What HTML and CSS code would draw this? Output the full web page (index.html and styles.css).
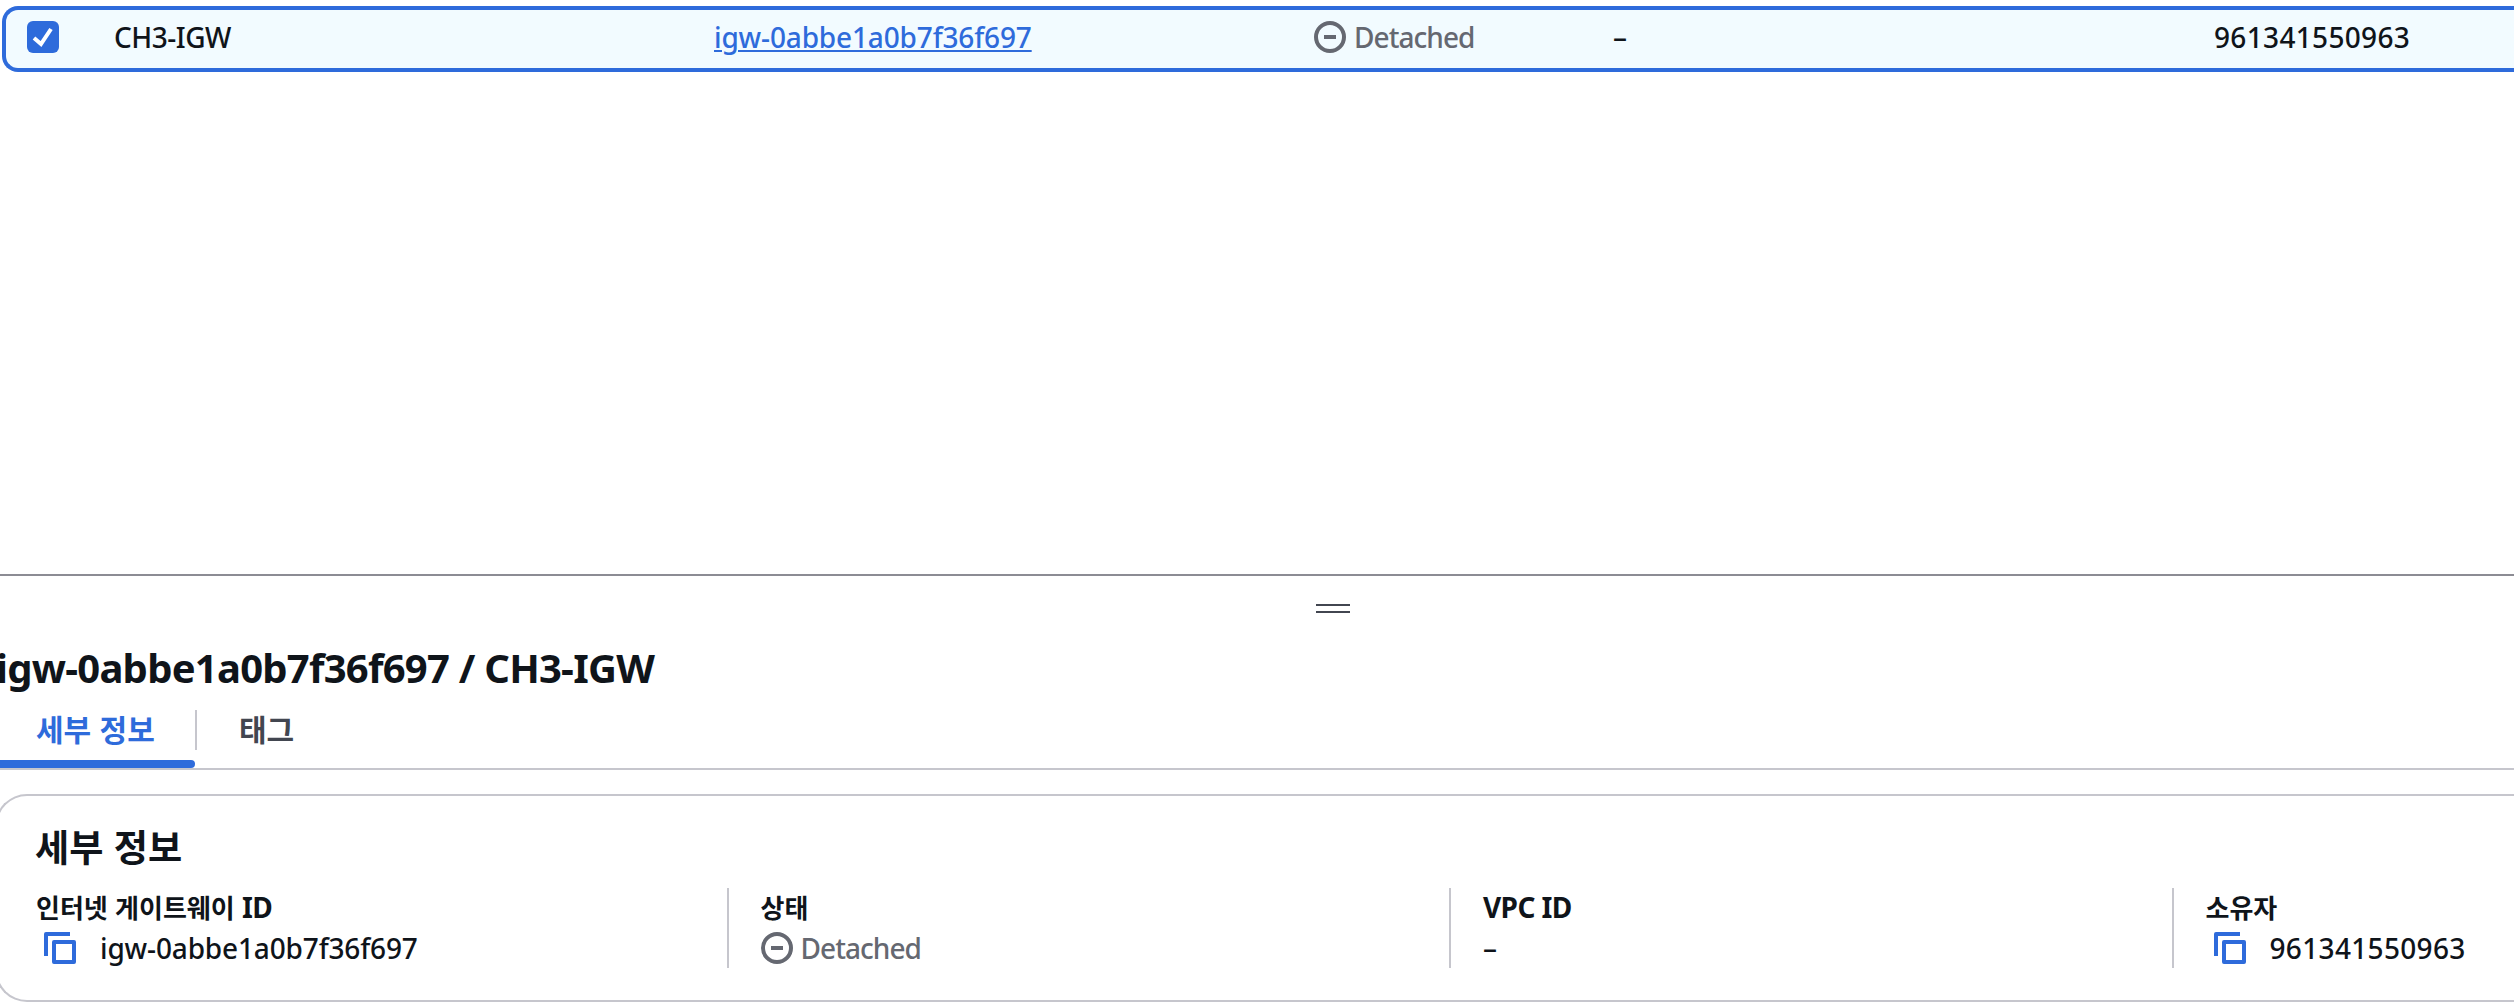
FILE: index.html
```html
<!DOCTYPE html>
<html lang="ko">
<head>
<meta charset="utf-8">
<title>CH3-IGW</title>
<link rel="stylesheet" href="styles.css">
</head>
<body>
<svg class="symbols" aria-hidden="true">
  <symbol id="minus" viewBox="0 0 32 32"><circle cx="16" cy="16" r="14" fill="none" stroke="currentColor" stroke-width="4"/><path d="M10 16h12" stroke="currentColor" stroke-width="4"/></symbol>
  <symbol id="copy" viewBox="0 0 32 32"><path d="M26 2H2v22" fill="none" stroke="currentColor" stroke-width="4" stroke-linejoin="round"/><path d="M10 10h20v20H10z" fill="none" stroke="currentColor" stroke-width="4" stroke-linejoin="round"/></symbol>
</svg>
<main class="list">
  <div class="row">
    <div class="select"><span class="checkbox"><svg viewBox="0 0 32 32"><path d="M7 17l7 6L24 8" fill="none" stroke="#fff" stroke-width="4"/></svg></span></div>
    <div class="cell name"><span class="t-name">CH3-IGW</span></div>
    <div class="cell id"><a class="link t-id" href="#">igw-0abbe1a0b7f36f697</a></div>
    <div class="cell state"><span class="status"><svg class="icon"><use href="#minus"/></svg><span class="t-state">Detached</span></span></div>
    <div class="cell vpc"><span class="t-dash">–</span></div>
    <div class="cell owner"><span class="t-num">961341550963</span></div>
  </div>
</main>
<section class="panel">
  <div class="handle"></div>
  <h1 class="title"><span class="t-title">igw-0abbe1a0b7f36f697 / CH3-IGW</span></h1>
  <nav class="tabs">
    <div class="tab active"><span class="t-tab">세부 정보</span></div>
    <div class="tab"><span class="t-tab">태그</span></div>
  </nav>
  <section class="card">
    <h2 class="card-title">세부 정보</h2>
    <div class="fields">
      <div class="field"><div class="label">인터넷 게이트웨이 <span class="latin">ID</span></div><div class="value"><svg class="icon copy"><use href="#copy"/></svg><span class="t-id">igw-0abbe1a0b7f36f697</span></div></div>
      <div class="field"><div class="label">상태</div><div class="value"><span class="status"><svg class="icon"><use href="#minus"/></svg><span class="t-state">Detached</span></span></div></div>
      <div class="field"><div class="label"><span class="latin">VPC ID</span></div><div class="value"><span class="t-dash">–</span></div></div>
      <div class="field"><div class="label">소유자</div><div class="value"><svg class="icon copy"><use href="#copy"/></svg><span class="t-num">961341550963</span></div></div>
    </div>
  </section>
</section>
</body>
</html>
```
FILE: styles.css
```css
* { box-sizing: border-box; }
body {
  margin: 0;
  height: 1006px;
  overflow: hidden;
  background: #fff;
  color: #0f141a;
  font: 500 28px/40px "Noto Sans", "Noto Sans CJK KR", sans-serif;
  white-space: nowrap;
}
.symbols { display: none; }
.icon { width: 32px; height: 32px; flex: none; }
.list { height: 574px; padding: 6px 0 0 2px; }
.row {
  display: flex;
  height: 66px;
  padding: 7px 0 0 21px;
  border: 4px solid #2e6bdb;
  border-right: 0;
  border-radius: 16px 0 0 16px;
  background: #f2fbff;
}
.select { width: 87px; padding-top: 4px; }
.checkbox { display: block; width: 32px; height: 32px; border-radius: 6px; background: #2e6bdb; }
.checkbox svg { display: block; }
.name, .id { width: 600px; }
.state { width: 299px; }
.vpc { width: 601px; }
.link { color: #2e6bdb; text-underline-offset: 2px; text-decoration-thickness: 2px; }
.status { display: flex; align-items: center; gap: 8px; color: #656871; }
.t-name { letter-spacing: -0.5px; }
.t-id { letter-spacing: -0.15px; }
.t-state { letter-spacing: -0.95px; }
.t-num { letter-spacing: 0.33px; }
.panel { border-top: 2px solid #8c8c94; }
.handle { width: 34px; height: 9px; margin: 28px 0 0 1316px; border: solid #424650; border-width: 2px 0; }
.title { margin: 30px 0 1px -4px; font-size: 40px; line-height: 50px; font-weight: 700; letter-spacing: -0.75px; }
.tabs { display: flex; height: 76px; border-bottom: 2px solid #c6c6cd; padding-top: 16px; }
.tab { height: 40px; padding-left: 42px; font: 700 30px/37px "Noto Sans CJK KR", sans-serif; color: #424650; }
.active {
  width: 197px;
  height: 58px;
  padding-left: 36px;
  color: #2e6bdb;
  background:
    linear-gradient(#c6c6cd, #c6c6cd) 195px 0 / 2px 40px no-repeat;
}
.active::after { content: ""; display: block; width: 205px; height: 8px; margin: 13px 0 0 -46px; border-radius: 4px; background: #2e6bdb; }
.card { height: 208px; margin: 24px 0 0 -5px; padding: 28px 0 0 7px; border: 2px solid #c6c6cd; border-right: 0; border-radius: 32px 0 0 32px; }
.card-title { margin: 0 0 20px 31px; font: 700 37.2px/44px "Noto Sans CJK KR", sans-serif; }
.fields { display: grid; grid-template-columns: repeat(3, 722.5px) 1fr; }
.field { height: 80px; padding-left: 32px; border-left: 2px solid #c6c6cd; }
.field:first-child { border-color: transparent; padding-left: 30px; }
.label { height: 40px; font: 700 26px/38px "Noto Sans CJK KR", sans-serif; }
.latin { font-family: "Noto Sans", sans-serif; font-size: 28px; letter-spacing: -0.6px; }
.value { display: flex; align-items: center; height: 40px; line-height: 38px; }
.copy { margin: 0 24px 0 8px; color: #2e6bdb; }
```
